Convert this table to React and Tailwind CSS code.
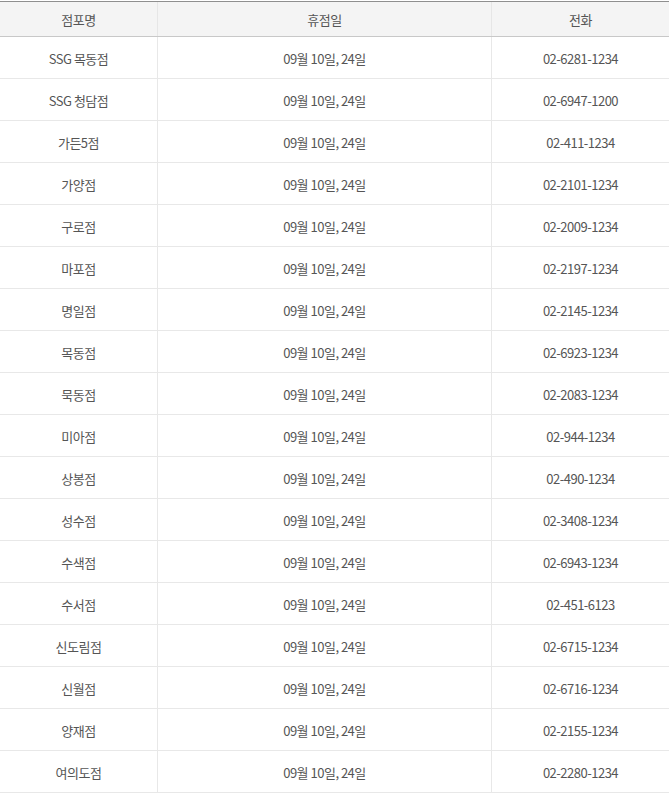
const rows = [
  ["SSG 목동점", "02-6281-1234"],
  ["SSG 청담점", "02-6947-1200"],
  ["가든5점", "02-411-1234"],
  ["가양점", "02-2101-1234"],
  ["구로점", "02-2009-1234"],
  ["마포점", "02-2197-1234"],
  ["명일점", "02-2145-1234"],
  ["목동점", "02-6923-1234"],
  ["묵동점", "02-2083-1234"],
  ["미아점", "02-944-1234"],
  ["상봉점", "02-490-1234"],
  ["성수점", "02-3408-1234"],
  ["수색점", "02-6943-1234"],
  ["수서점", "02-451-6123"],
  ["신도림점", "02-6715-1234"],
  ["신월점", "02-6716-1234"],
  ["양재점", "02-2155-1234"],
  ["여의도점", "02-2280-1234"],
];

export default function App() {
  return (
    <div
      className="w-[669px] bg-white pt-px text-[13px] text-[#555] tracking-[-0.5px]"
      style={{ fontFamily: '"Noto Sans CJK KR", "Noto Sans", sans-serif' }}
    >
      <div className="grid grid-cols-[157px_334px_1fr] border-t border-b border-t-[#8f8f8f] border-b-[#c8c8c8] bg-[#f4f4f4]">
        <div className="h-[34px] pt-px flex items-center justify-center">점포명</div>
        <div className="h-[34px] pt-px flex items-center justify-center border-l border-[#e6e6e6]">휴점일</div>
        <div className="h-[34px] pt-px flex items-center justify-center border-l border-[#e6e6e6]">전화</div>
      </div>
      {rows.map(([name, tel]) => (
        <div key={name} className="grid grid-cols-[157px_334px_1fr] border-b border-[#e8e8e8]">
          <div className="h-[41px] pt-[2px] flex items-center justify-center">{name}</div>
          <div className="h-[41px] pt-[2px] flex items-center justify-center border-l border-[#e8e8e8]">09월 10일, 24일</div>
          <div className="h-[41px] pt-[2px] flex items-center justify-center border-l border-[#e8e8e8]">{tel}</div>
        </div>
      ))}
    </div>
  );
}
